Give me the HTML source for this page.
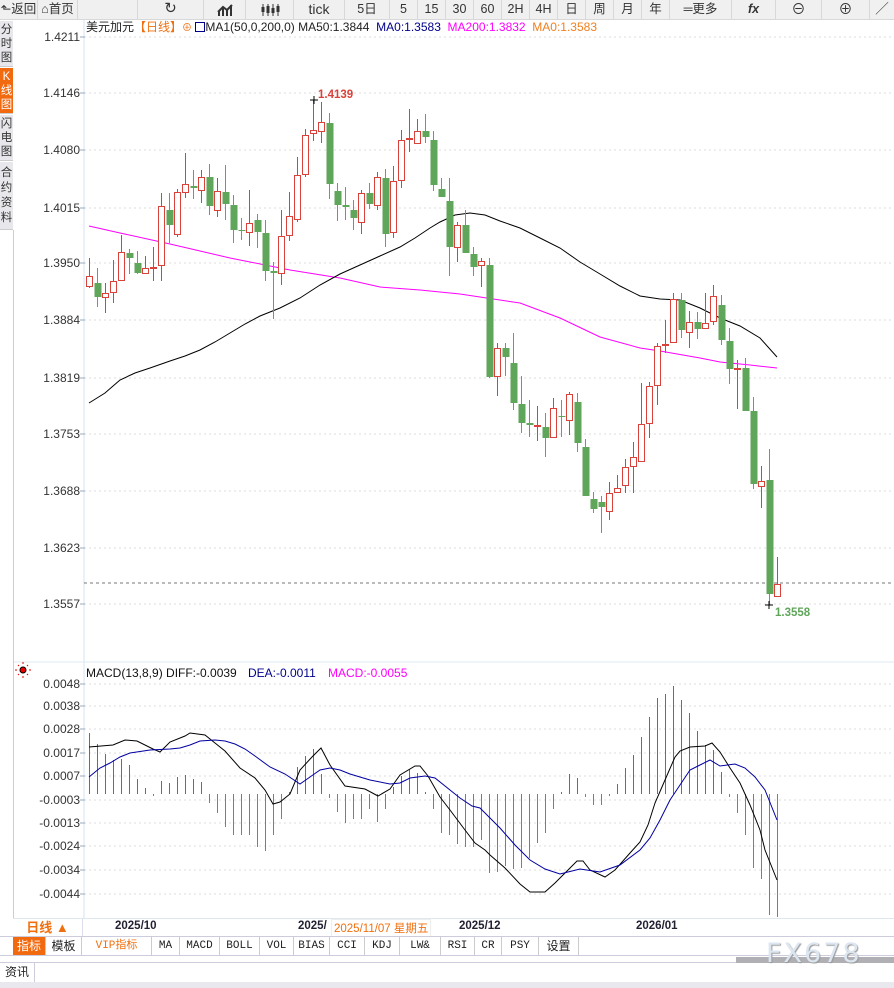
<!DOCTYPE html>
<html><head><meta charset="utf-8">
<style>
*{margin:0;padding:0;box-sizing:border-box}
body{width:894px;height:988px;overflow:hidden;background:#fff;font-family:"Liberation Sans","Noto Sans CJK SC",sans-serif;position:relative;color:#222}
.a{position:absolute;white-space:nowrap}
#tb{position:absolute;left:0;top:0;width:894px;height:20px;background:#f0f0f0;border-bottom:1px solid #d8d8d8}
#tb .b{position:absolute;top:0;height:20px;line-height:18px;font-size:12.5px;color:#333;text-align:center;border-right:1px solid #d8d8d8}
.side{position:absolute;left:0;width:13px;font-size:11.5px;line-height:14px;text-align:center;color:#333;background:#e8e8ec;border-bottom:1px solid #ccc;overflow:hidden}
.tab{position:absolute;top:937px;height:18px;line-height:18px;font-family:"Liberation Mono","Noto Sans CJK SC",monospace;font-size:11px;text-align:center;border-right:1px solid #ccc;color:#222}
</style></head><body>
<div id="tb">
<div class="b" style="left:0;width:38px">&#x2B11;返回</div>
<div class="b" style="left:38px;width:40px">&#x2302;首页</div>
<div class="b" style="left:78px;width:60px"></div>
<div class="b" style="left:138px;width:66px;font-size:15px">&#x21BB;</div>
<div class="b" style="left:204px;width:42px"><svg width="16" height="14" style="margin-top:3px"><path d="M2 13V8M6 13V5M10 13V7M14 13V2M1 9L6 4L10 7L15 2" stroke="#333" stroke-width="2" fill="none"/></svg></div>
<div class="b" style="left:246px;width:48px"><svg width="20" height="14" style="margin-top:3px"><path d="M3 1V13M8 1V13M13 1V13M18 1V13" stroke="#333"/><rect x="1.5" y="4" width="3" height="5" fill="#333"/><rect x="6.5" y="3" width="3" height="7" fill="#333"/><rect x="11.5" y="5" width="3" height="5" fill="#333"/><rect x="16.5" y="3" width="3" height="6" fill="#333"/></svg></div>
<div class="b" style="left:294px;width:51px;font-size:14px">tick</div>
<div class="b" style="left:345px;width:45px">5日</div>
<div class="b" style="left:390px;width:28px">5</div>
<div class="b" style="left:418px;width:28px">15</div>
<div class="b" style="left:446px;width:28px">30</div>
<div class="b" style="left:474px;width:28px">60</div>
<div class="b" style="left:502px;width:28px">2H</div>
<div class="b" style="left:530px;width:28px">4H</div>
<div class="b" style="left:558px;width:28px">日</div>
<div class="b" style="left:586px;width:28px">周</div>
<div class="b" style="left:614px;width:28px">月</div>
<div class="b" style="left:642px;width:28px">年</div>
<div class="b" style="left:670px;width:62px"><b>&#x2550;</b>更多</div>
<div class="b" style="left:732px;width:44px;font-style:italic;font-weight:bold">fx</div>
<div class="b" style="left:776px;width:46px;font-size:14px">&#x2296;</div>
<div class="b" style="left:822px;width:48px;font-size:14px">&#x2295;</div>
<div class="b" style="left:870px;width:24px;border:none">&#x2571;</div>
</div>

<div class="side" style="top:21px;height:46px;padding-top:2px">分<br>时<br>图</div>
<div class="side" style="top:68px;height:46px;background:#f26a10;color:#fff;padding-top:2px">K<br>线<br>图</div>
<div class="side" style="top:115px;height:46px;padding-top:2px">闪<br>电<br>图</div>
<div class="side" style="top:162px;height:68px;padding-top:4px;line-height:15px">合<br>约<br>资<br>料</div>
<div class="a" style="left:13px;top:230px;width:1px;height:688px;background:#ccd"></div>

<svg class="a" style="left:0;top:20px" width="894" height="898" viewBox="0 20 894 898" id="sv">
<line x1="84" y1="20" x2="84" y2="918" stroke="#d5e3ef"/>
<line x1="14" y1="662" x2="894" y2="662" stroke="#dde8f0"/>
<g id="grid" stroke="#ddd" stroke-dasharray="2,3"></g>
<g id="lab" font-size="12" fill="#333" text-anchor="end"></g>
<line x1="84" y1="583" x2="894" y2="583" stroke="#777" stroke-dasharray="3,3"/>
<polyline fill="none" stroke="#ff00ff" stroke-width="1" points="89,226 120,233 170,244 230,258 290,270 340,278 380,287 420,290 460,294 480,297 520,303 560,318 600,337 640,348 660,351 700,358 720,362 750,365 777,368"/>
<polyline fill="none" stroke="#000" stroke-width="1" points="89,403 105,393 120,380 135,373 150,368 170,361 185,356 200,350 215,342 230,333 245,324 260,316 280,308 300,298 320,285 340,274 360,265 380,256 400,247 415,238 430,228 440,222 455,215 470,213 485,215 500,221 520,228 540,238 560,248 580,262 600,274 620,286 640,296 660,299 680,300 700,308 720,318 740,326 760,338 777,357"/>
<g id="cd"></g>
<g id="mh" shape-rendering="crispEdges"></g>
<polyline fill="none" stroke="#000" points="89,747 113,745 125,740 137,741 153,749 160,752 170,742 185,736 190,733 205,735 215,743 225,751 240,768 255,778 265,790 273,804 280,802 290,794 300,770 312,757 321,748 330,765 345,786 365,789 378,796 390,789 400,775 415,766 420,766 428,776 440,797 450,810 465,830 475,843 485,850 490,855 505,868 520,884 530,892 545,892 555,883 565,873 577,861 583,861 590,870 605,877 615,870 630,853 640,842 648,825 655,803 665,780 675,757 680,751 690,747 705,746 712,743 720,752 730,768 740,783 750,805 760,830 765,850 777,880"/>
<polyline fill="none" stroke="#0000a0" points="89,777 100,768 110,763 120,757 130,753 150,750 170,749 180,748 190,745 200,741 215,740 225,741 235,744 245,749 255,756 270,767 285,774 300,784 310,777 320,770 330,768 340,770 350,774 370,780 390,784 400,783 410,778 425,776 435,778 450,790 460,798 472,806 480,808 490,818 500,828 515,845 530,860 545,869 560,874 580,869 600,872 620,865 640,850 650,838 660,820 670,800 680,785 690,770 700,765 710,760 720,766 735,764 745,768 755,777 765,790 777,820"/>
<text x="318" y="98" font-size="11.5" font-weight="bold" fill="#d9413a">1.4139</text>
<path d="M310 100H318M314 96V104" stroke="#000"/>
<text x="775" y="616" font-size="11.5" font-weight="bold" fill="#5fa55a">1.3558</text>
<path d="M765 605H773M769 601V609" stroke="#000"/>
<circle cx="23" cy="670" r="3" fill="#e00" stroke="#000" stroke-width="1"/>
<path d="M23 664V662M23 676V678M17 670H15M29 670H31M19 666L18 665M27 666L28 665M19 674L18 675M27 674L28 675" stroke="#e00"/>
<text x="86" y="677" font-size="12" fill="#111">MACD(13,8,9) DIFF:-0.0039</text>
<text x="248" y="677" font-size="12" fill="#00008b">DEA:-0.0011</text>
<text x="328" y="677" font-size="12" fill="#ff00ff">MACD:-0.0055</text>
</svg>

<div class="a" style="left:86px;top:19px;font-size:12px;line-height:16px">美元加元<span style="color:#f07010">【日线】</span><span style="color:#f07010;font-size:10px">&#x2295;</span> <span style="display:inline-block;width:10px;height:10px;border:1px solid #00008b;vertical-align:-1px"></span>MA1(50,0,200,0) MA50:1.3844 &nbsp;<span style="color:#00008b">MA0:1.3583</span> &nbsp;<span style="color:#ff00ff">MA200:1.3832</span> &nbsp;<span style="color:#f08020">MA0:1.3583</span></div>

<div class="a" style="left:13px;top:918px;width:881px;height:1px;background:#dde8f0"></div>
<div class="a" style="left:13px;top:919px;width:70px;height:18px;line-height:18px;text-align:center;color:#f07010;font-size:13px;font-weight:bold;border-right:1px solid #dde">日线 ▲</div>
<div class="a" style="left:115px;top:920px;font-size:11.5px;font-weight:bold;color:#223">2025/10</div>
<div class="a" style="left:298px;top:920px;font-size:11.5px;font-weight:bold;color:#223">2025/</div>
<div class="a" style="left:331px;top:919px;font-size:11.5px;color:#f07010;background:#fff;border:1px solid #eee;padding:0 2px">2025/11/07 星期五</div>
<div class="a" style="left:459px;top:920px;font-size:11.5px;font-weight:bold;color:#223">2025/12</div>
<div class="a" style="left:636px;top:920px;font-size:11.5px;font-weight:bold;color:#223">2026/01</div>
<div class="a" style="left:0;top:936px;width:894px;height:1px;background:#ccd"></div>
<div class="tab" style="left:13px;width:33px;background:#f26a10;color:#fff;font-family:'Noto Sans CJK SC',sans-serif;font-size:12px">指标</div>
<div class="tab" style="left:46px;width:36px;font-family:'Noto Sans CJK SC',sans-serif;font-size:12px">模板</div>
<div class="tab" style="left:82px;width:70px;color:#f07010">VIP指标</div>
<div class="tab" style="left:152px;width:28px">MA</div>
<div class="tab" style="left:180px;width:40px">MACD</div>
<div class="tab" style="left:220px;width:40px">BOLL</div>
<div class="tab" style="left:260px;width:34px">VOL</div>
<div class="tab" style="left:294px;width:36px">BIAS</div>
<div class="tab" style="left:330px;width:35px">CCI</div>
<div class="tab" style="left:365px;width:35px">KDJ</div>
<div class="tab" style="left:400px;width:41px">LW&amp;</div>
<div class="tab" style="left:441px;width:34px">RSI</div>
<div class="tab" style="left:475px;width:27px">CR</div>
<div class="tab" style="left:502px;width:37px">PSY</div>
<div class="tab" style="left:539px;width:40px;font-family:'Noto Sans CJK SC',sans-serif;font-size:12px">设置</div>
<div class="a" style="left:0;top:955px;width:894px;height:1px;background:#ccd"></div>
<div class="a" style="left:0;top:962px;width:894px;height:1px;background:#ccd"></div>
<div class="a" style="left:736px;top:957px;width:158px;height:6px;background:#b0b0b4"></div>
<div class="a" style="left:766px;top:938px;font-size:27px;letter-spacing:2px;color:#dce6f0;text-shadow:1px 1px 1px #999;font-family:'DejaVu Sans',sans-serif">FX678</div>
<div class="a" style="left:0;top:963px;width:35px;height:19px;line-height:19px;font-size:12px;text-align:center;border-right:1px solid #ccd">资讯</div>
<div class="a" style="left:0;top:982px;width:894px;height:6px;background:#e8e8ee"></div>

<script>
var ns="http://www.w3.org/2000/svg";
function el(p,t,a){var e=document.createElementNS(ns,t);for(var k in a)e.setAttribute(k,a[k]);p.appendChild(e);return e;}
var g=document.getElementById('grid'),lb=document.getElementById('lab');
var pl=[["1.4211",37],["1.4146",93],["1.4080",150],["1.4015",208],["1.3950",263],["1.3884",320],["1.3819",378],["1.3753",434],["1.3688",491],["1.3623",548],["1.3557",604],
["0.0048",684],["0.0038",706],["0.0028",729],["0.0017",753],["0.0007",776],["-0.0003",800],["-0.0013",823],["-0.0024",846],["-0.0034",870],["-0.0044",894]];
pl.forEach(function(p){el(g,'line',{x1:84,y1:p[1],x2:894,y2:p[1]});var t=el(lb,'text',{x:80,y:p[1]+4});t.textContent=p[0];el(document.getElementById('sv'),'line',{x1:80,y1:p[1],x2:85,y2:p[1],stroke:'#9ab'});});
var C=[
"R276,287,258,288","G283,297,268,307","R293,298,283,313","R281,293,260,303","R252,281,235,281","G253,258,249,274","G263,273,251,274","R268,274,256,274","R267,268,247,281","R206,266,193,281",
"G210,225,193,243","R192,235,189,237","R184,193,153,198","G186,188,170,199","R177,191,170,203","G177,206,164,215","R191,211,178,217","G192,204,165,220","G205,230,195,243","G230,231,218,240",
"R223,233,190,246","G220,232,214,248","G233,271,220,281","G271,273,262,319","R236,274,210,285","R216,236,192,241","R175,220,157,222","R135,175,129,177","R130,134,100,141","R122,132,102,143",
"G123,184,113,199","G191,205,183,221","G205,207,187,220","G210,218,200,230","R193,223,190,234","G193,204,183,209","R177,206,172,210","G178,234,169,247","R181,233,166,238","R140,181,130,188",
"R138,140,109,152","R131,144,119,144","G131,137,114,143","G140,185,131,191","G189,197,178,197","G201,247,178,276","R225,248,222,262","G225,253,210,253","G254,267,247,276","R261,266,258,287",
"G265,377,258,378","R348,377,343,396","G348,357,343,376","G363,403,333,410","G404,423,376,433","G423,425,400,437","R425,426,406,441","G427,438,413,457","R408,438,398,438","G416,417,400,437",
"R394,421,392,435","G402,443,393,452","G447,496,439,496","G499,509,492,513","G502,507,496,533","R493,512,482,520","R488,493,475,493","R467,486,459,493","R457,467,442,493","R424,462,383,462",
"R386,424,382,438","R346,386,343,405","R344,346,320,353","R299,343,293,343","G300,330,293,338","R322,333,311,348","G322,329,312,339","R323,329,293,329","R296,322,285,325","G305,340,295,345",
"G341,369,328,384","R368,369,360,409","G368,411,358,411","G411,484,397,489","R481,487,466,508","G480,594,449,605","R584,597,557,597"];
var H=[733,744,754,760,759,765,779,788,796,781,783,777,775,779,782,803,813,827,835,835,835,847,851,835,819,792,767,756,749,774,798,812,823,819,819,809,822,809,787,776,769,773,792,809,833,835,844,847,847,840,873,872,866,869,868,858,843,833,809,792,774,778,797,805,805,796,784,768,755,737,717,698,694,686,700,713,731,745,750,772,797,813,835,868,879,915,917];
var cd=document.getElementById('cd'),mh=document.getElementById('mh');
C.forEach(function(s,i){var x=89+8*i,r=s[0]=='R',v=s.slice(1).split(',').map(Number);var col=r?'#d9413a':'#5fa55a';
el(cd,'line',{x1:x+.5,y1:v[2],x2:x+.5,y2:v[3],stroke:col});
var h=Math.max(v[1]-v[0],1);
if(r)el(cd,'rect',{x:x-2.5,y:v[0]+.5,width:6,height:Math.max(h-1,1),fill:'#fff',stroke:col});
else el(cd,'rect',{x:x-2.5,y:v[0],width:7,height:h,fill:col});
var y=H[i];el(mh,'rect',{x:x,y:Math.min(794,y),width:1,height:Math.max(Math.abs(y-794),1),fill:y<794?'#d04535':'#4f9e4a'});
});
</script>
</body></html>
